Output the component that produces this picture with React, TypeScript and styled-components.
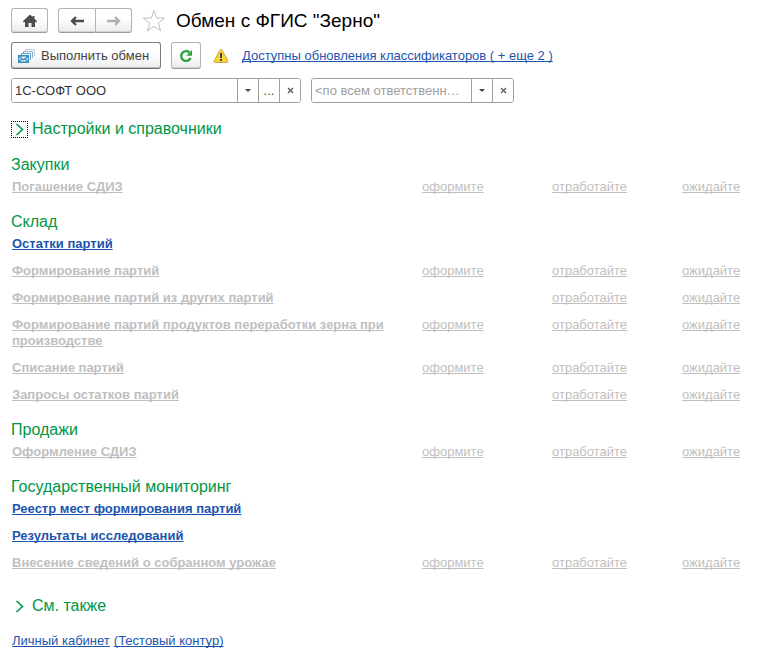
import React from "react";
import styled, { createGlobalStyle } from "styled-components";

const GlobalStyle = createGlobalStyle`
  * { box-sizing: border-box; }
  body {
    margin: 0;
    background: #fff;
    color: #333;
    font-family: "Liberation Sans", Arial, sans-serif;
    font-size: 13px;
    line-height: 16px;
  }
  button, input { font: inherit; color: inherit; }
`;

const Page = styled.main`
  padding: 8px 11px 7px;
`;

const Bar = styled.div<{ $space: number }>`
  display: flex;
  align-items: center;
  gap: 10px;
  margin-bottom: ${(p) => p.$space}px;
`;

const Button = styled.button<{ $width: number; $tall?: boolean; $strong?: boolean }>`
  display: flex;
  align-items: center;
  justify-content: center;
  flex: none;
  gap: 6px;
  width: ${(p) => p.$width}px;
  height: ${(p) => (p.$tall ? 27 : 25)}px;
  padding: 0;
  border: 1px solid ${(p) => (p.$strong ? "#7c7c7c" : "#b3b3b3")};
  border-bottom-color: ${(p) => (p.$strong ? "#6c6c6c" : "#9a9a9a")};
  border-radius: 3px;
  background: linear-gradient(#fff 40%, #ececec);
  box-shadow: inset 0 -1px ${(p) => (p.$strong ? "#bdbdbd" : "#d2d2d2")};
  color: #444;
  white-space: nowrap;
`;

const LabelledButton = styled(Button)`
  justify-content: flex-start;
  padding-left: 6px;
`;

const ButtonPair = styled.div`
  display: flex;

  ${Button}:first-child {
    border-radius: 3px 0 0 3px;
  }
  ${Button}:last-child {
    border-left: 0;
    border-radius: 0 3px 3px 0;
  }
`;

const Title = styled.h1`
  margin: 0;
  color: #000;
  font-size: 19px;
  font-weight: 400;
  line-height: 24px;
`;

const Favourite = styled.button`
  display: flex;
  flex: none;
  padding: 0;
  border: 0;
  background: none;
`;

const Notice = styled.div`
  display: flex;
  align-items: center;
  gap: 13px;
  margin-left: 2px;
`;

const Link = styled.a<{ $muted?: boolean; $bold?: boolean }>`
  color: ${(p) => (p.$muted ? "#bfbfbf" : "#1c55ae")};
  font-weight: ${(p) => (p.$bold ? 700 : 400)};
  text-decoration: underline;
  text-decoration-thickness: 1px;
  text-decoration-skip-ink: none;
  text-underline-offset: 1px;
`;

const Field = styled.div<{ $width: number }>`
  display: flex;
  width: ${(p) => p.$width}px;
  height: 25px;
  border: 1px solid #a0a0a0;
  border-radius: 3px;
  overflow: hidden;
`;

const TextInput = styled.input`
  flex: 1;
  min-width: 0;
  padding: 0 3px;
  border: 0;
  outline: 0;
  background: #fff;
  text-overflow: ellipsis;

  &::placeholder {
    color: #a0a0a0;
    opacity: 1;
  }
`;

const FieldButton = styled.button`
  display: flex;
  align-items: center;
  justify-content: center;
  flex: none;
  width: 21px;
  padding: 0;
  border: 0;
  border-left: 1px solid #a0a0a0;
  background: #fff;
  color: #444;
`;

const Expander = styled.button<{ $focused?: boolean }>`
  display: flex;
  align-items: center;
  gap: 4px;
  padding: 0;
  border: 0;
  background: none;
  color: #009646;
  font-size: 16px;
  line-height: 20px;

  svg {
    width: 17px;
    height: 17px;
    outline: ${(p) => (p.$focused ? "1px dotted #000" : "none")};
    outline-offset: -1px;
  }
`;

const Section = styled.section`
  margin-top: 17px;

  &:first-of-type {
    margin-top: 16px;
  }
`;

const Heading = styled.h2`
  margin: 0 0 4px;
  color: #009646;
  font-size: 16px;
  font-weight: 400;
  line-height: 20px;
`;

const Rows = styled.div`
  display: grid;
  gap: 11px;
  padding-left: 1px;
`;

const Row = styled.div`
  display: grid;
  grid-template-columns: minmax(0, 1fr) 130px 130px 86px;
`;

const Name = styled.div`
  padding-right: 16px;
`;

const Footer = styled.footer`
  display: grid;
  justify-items: start;
  gap: 17px;
  margin-top: 25px;
`;

const FooterLinks = styled.div`
  display: flex;
  gap: 4px;
  padding-left: 1px;
`;

type Item = { name: string; steps?: string[]; active?: boolean };

const all = ["оформите", "отработайте", "ожидайте"];
const noCreate = ["", "отработайте", "ожидайте"];

const sections: { title: string; items: Item[] }[] = [
  { title: "Закупки", items: [{ name: "Погашение СДИЗ", steps: all }] },
  {
    title: "Склад",
    items: [
      { name: "Остатки партий", active: true },
      { name: "Формирование партий", steps: all },
      { name: "Формирование партий из других партий", steps: noCreate },
      { name: "Формирование партий продуктов переработки зерна при производстве", steps: all },
      { name: "Списание партий", steps: all },
      { name: "Запросы остатков партий", steps: noCreate },
    ],
  },
  { title: "Продажи", items: [{ name: "Оформление СДИЗ", steps: all }] },
  {
    title: "Государственный мониторинг",
    items: [
      { name: "Реестр мест формирования партий", active: true },
      { name: "Результаты исследований", active: true },
      { name: "Внесение сведений о собранном урожае", steps: all },
    ],
  },
];

const HomeIcon = () => (
  <svg width="16" height="14" viewBox="0 0 16 14" fill="#4d4d4d">
    <path d="M8 .5.8 7.300 2 8.500 3 7.700V13h3.500V9h3v4H13V7.700l1 .8 1.200-1.200L12.500 4.800V2h-2v.9z" />
  </svg>
);

const ArrowIcon = ({ forward }: { forward?: boolean }) => (
  <svg width="14" height="12" viewBox="0 0 14 12" fill="none" stroke={forward ? "#b0b0b0" : "#4a4a4a"} strokeWidth="2">
    <path d={forward ? "M0 6h12M8 2 12 6 8 10" : "M14 6H2M6 2 2 6 6 10"} strokeWidth="2.400" />
  </svg>
);

const StarIcon = () => (
  <svg width="24" height="24" viewBox="0 0 24 24" fill="#fff" stroke="#b9c0c8">
    <path d="m12 1.500 2.700 7.600h8l-6.400 4.900 2.400 8L12 17.300 5.300 22l2.400-8L1.300 9.100h8z" />
  </svg>
);

const ExchangeIcon = () => (
  <svg width="17" height="14" viewBox="0 0 17 14" fill="none">
    <path d="M7.500 2.500V.5h9v6.500" stroke="#b7cbd9" />
    <path d="M5.500 4.500v-2h9v6.500" stroke="#87b3cd" />
    <path d="M3.500 6.500v-2h9V11" stroke="#5a9fc6" />
    <path d="M.8 6.800h9.400v6.400H.8z" fill="#eef8fd" stroke="#318abb" strokeWidth="1.400" />
    <path d="m1 7 4.500 4L10 7M1 13l3-3m6 3-3-3" stroke="#318abb" strokeWidth="1.200" />
  </svg>
);

const RefreshIcon = () => (
  <svg width="14" height="14" viewBox="0 0 14 14">
    <path d="M10.500 3.400A4.900 4.900 0 1 0 11.600 9" fill="none" stroke="#2ba43a" strokeWidth="2.400" />
    <path d="M13 1v5.800H7.200z" fill="#2ba43a" />
  </svg>
);

const WarningIcon = () => (
  <svg width="16" height="16" viewBox="0 0 16 16">
    <path d="M8 1.500q.8 0 1.200.9l5.600 10.400q.6 1.700-1 1.700H2.200q-1.600 0-1-1.700L6.800 2.400Q7.200 1.500 8 1.500z" fill="#fcd535" stroke="#c6a348" />
    <path d="M7 5h2v5H7zM7 11h2v2H7z" fill="#424242" />
  </svg>
);

const DropIcon = () => (
  <svg width="6" height="3" viewBox="0 0 6 3"><path d="M0 0h6L3 3z" fill="#444" /></svg>
);

const ClearIcon = () => (
  <svg width="7" height="7" viewBox="0 0 7 7" stroke="#555" strokeWidth="1.200"><path d="m1 1 5 5m0-5-5 5" /></svg>
);

const ChevronIcon = () => (
  <svg viewBox="0 0 17 17" fill="none" stroke="#009646" strokeWidth="1.600"><path d="m5.500 3 6 5.500-6 5.500" /></svg>
);

export default function App() {
  return (
    <Page>
      <GlobalStyle />
      <Bar $space={9}>
        <Button $width={37} aria-label="Главная"><HomeIcon /></Button>
        <ButtonPair>
          <Button $width={38} aria-label="Назад"><ArrowIcon /></Button>
          <Button $width={36} aria-label="Вперед"><ArrowIcon forward /></Button>
        </ButtonPair>
        <Favourite aria-label="В избранное"><StarIcon /></Favourite>
        <Title>Обмен с ФГИС "Зерно"</Title>
      </Bar>

      <Bar $space={9}>
        <LabelledButton $width={150} $tall $strong><ExchangeIcon />Выполнить обмен</LabelledButton>
        <Button $width={30} $tall aria-label="Обновить"><RefreshIcon /></Button>
        <Notice>
          <WarningIcon />
          <Link href="#updates">Доступны обновления классификаторов ( + еще 2 )</Link>
        </Notice>
      </Bar>

      <Bar $space={16}>
        <Field $width={290}>
          <TextInput aria-label="Организация" defaultValue="1С-СОФТ ООО" />
          <FieldButton aria-label="Выбрать организацию"><DropIcon /></FieldButton>
          <FieldButton aria-label="Показать все">...</FieldButton>
          <FieldButton aria-label="Очистить организацию"><ClearIcon /></FieldButton>
        </Field>
        <Field $width={203}>
          <TextInput aria-label="Ответственный" placeholder="<по всем ответственным>" />
          <FieldButton aria-label="Выбрать ответственного"><DropIcon /></FieldButton>
          <FieldButton aria-label="Очистить ответственного"><ClearIcon /></FieldButton>
        </Field>
      </Bar>

      <Expander $focused aria-expanded={false}><ChevronIcon />Настройки и справочники</Expander>

      {sections.map((section) => (
        <Section key={section.title}>
          <Heading>{section.title}</Heading>
          <Rows>
            {section.items.map((item) => (
              <Row key={item.name}>
                <Name><Link href="#list" $bold $muted={!item.active}>{item.name}</Link></Name>
                {item.steps?.map((step, i) => (
                  <div key={i}>{step && <Link href="#step" $muted>{step}</Link>}</div>
                ))}
              </Row>
            ))}
          </Rows>
        </Section>
      ))}

      <Footer>
        <Expander aria-expanded={false}><ChevronIcon />См. также</Expander>
        <FooterLinks>
          <Link href="#account">Личный кабинет</Link>
          <Link href="#test">(Тестовый контур)</Link>
        </FooterLinks>
      </Footer>
    </Page>
  );
}
